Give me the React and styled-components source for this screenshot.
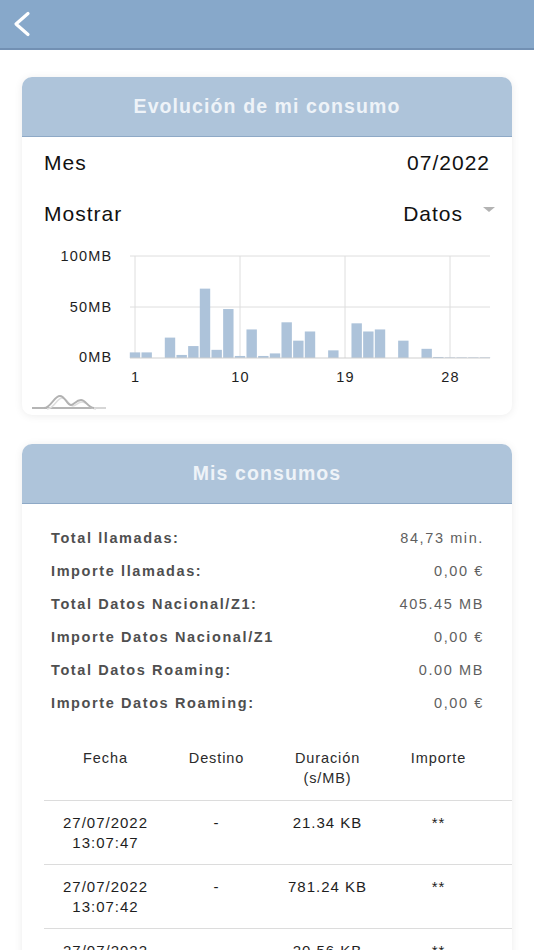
import React from 'react';
import styled, { createGlobalStyle } from 'styled-components';

const GlobalStyle = createGlobalStyle`
  * { box-sizing: border-box; }
  html, body { margin: 0; padding: 0; background: #fff; }
  body { font-family: "Liberation Sans", Arial, Helvetica, sans-serif; }
`;

const Page = styled.div`
  width: 534px;
  min-height: 950px;
  background: #fff;
`;

const TopBar = styled.header`
  height: 50px;
  background: #87a8ca;
  border-bottom: 2px solid #7290b3;
  display: flex;
  align-items: center;
  padding-left: 11px;
`;

const BackButton = styled.button`
  border: 0;
  background: transparent;
  padding: 0;
  width: 22px;
  height: 26px;
  display: flex;
  align-items: center;
  justify-content: center;
  cursor: pointer;
`;

const Content = styled.main`
  padding: 27px 22px 0;
  display: flex;
  flex-direction: column;
  gap: 29px;
`;

const Card = styled.section`
  background: #fff;
  border-radius: 10px;
  box-shadow: 0 1px 8px rgba(0, 0, 0, 0.08);
  overflow: hidden;
`;

const CardHeader = styled.h2`
  margin: 0;
  height: 60px;
  background: #aec4da;
  border-bottom: 1px solid #8ea9c6;
  display: flex;
  align-items: center;
  justify-content: center;
  color: #eef3f8;
  font-size: 19.5px;
  font-weight: 700;
  letter-spacing: 1.1px;
`;

const FieldRow = styled.div`
  height: 51px;
  padding: 0 22px;
  display: flex;
  align-items: center;
  justify-content: space-between;
  font-size: 21px;
  letter-spacing: 1px;
  color: #111;
`;

const SelectValue = styled.div`
  display: flex;
  align-items: center;
`;

const Caret = styled.span`
  width: 0;
  height: 0;
  margin-left: 20px;
  margin-right: -5px;
  margin-top: -9px;
  border-left: 6px solid transparent;
  border-right: 6px solid transparent;
  border-top: 5px solid #b3b3b3;
`;

const ChartSvg = styled.svg`
  display: block;
  font-family: "Liberation Sans", Arial, sans-serif;
`;

const MiniIcon = styled.svg`
  display: block;
  margin: 2px 0 3px 8px;
`;

const Summary = styled.div`
  padding: 17px 28px 0 29px;
`;

const SummaryRow = styled.div`
  height: 33px;
  display: flex;
  align-items: center;
  justify-content: space-between;
  font-size: 14.5px;
`;

const SummaryLabel = styled.span`
  font-weight: 700;
  color: #4f4f4f;
  letter-spacing: 1.6px;
`;

const SummaryValue = styled.span`
  color: #5f5f5f;
  letter-spacing: 1.6px;
`;

const Table = styled.div`
  margin-top: 29px;
  padding-left: 22px;
`;

const TableRow = styled.div`
  display: grid;
  grid-template-columns: repeat(4, 1fr);
  padding: ${(p) => (p.$head ? '0 18px 12px 6px' : '12px 18px 11px 6px')};
  border-bottom: 1.5px solid #dcdcdc;
  font-size: ${(p) => (p.$head ? '14.5px' : '15px')};
  color: ${(p) => (p.$head ? '#2b2b2b' : '#1e1e1e')};
  letter-spacing: ${(p) => (p.$head ? '0.9px' : '1px')};
  line-height: 20px;
`;

const Cell = styled.div`
  text-align: center;
`;

const values = [5.5, 5.5, 0, 20, 3, 11.7, 68, 8, 48, 2, 28, 2, 4.5, 35, 17, 26, 0, 7.5, 0, 34, 26, 28, 0, 17, 0, 9, 1, 0.6, 0.6, 0.6, 0.6];

const Chart = () => {
  const y0 = 119;
  const scale = 1.02;
  const dayX = (d) => 113 + (d - 1) * 11.667;
  const grid = '#dedede';
  return (
    <ChartSvg width="490" height="153" viewBox="0 0 490 153">
      {[17, 68].map((y) => (
        <line key={y} x1="108" x2="468" y1={y} y2={y} stroke={grid} strokeWidth="1" />
      ))}
      {[1, 10, 19, 28].map((d) => (
        <line key={d} x1={dayX(d)} x2={dayX(d)} y1="17" y2={y0} stroke={grid} strokeWidth="1" />
      ))}
      {values.map((v, i) =>
        v > 0 ? (
          <rect
            key={i}
            x={dayX(i + 1) - 5.2}
            y={y0 - v * scale}
            width="10.4"
            height={v * scale}
            fill="#adc3da"
          />
        ) : null
      )}
      <line x1="108" x2="468" y1={y0} y2={y0} stroke="#cfcfcf" strokeWidth="1" />
      {[
        ['100MB', 17],
        ['50MB', 68],
        ['0MB', 118],
      ].map(([t, y]) => (
        <text key={t} x="90.5" y={y} textAnchor="end" dominantBaseline="central" fontSize="14.5" fill="#1e1e1e" style={{ letterSpacing: '1.2px' }}>
          {t}
        </text>
      ))}
      {[1, 10, 19, 28].map((d) => (
        <text key={d} x={dayX(d) + 0.6} y="138" textAnchor="middle" dominantBaseline="central" fontSize="14.5" fill="#1e1e1e" style={{ letterSpacing: '1.2px' }}>
          {d}
        </text>
      ))}
    </ChartSvg>
  );
};

const summary = [
  ['Total llamadas:', '84,73 min.'],
  ['Importe llamadas:', '0,00 €'],
  ['Total Datos Nacional/Z1:', '405.45 MB'],
  ['Importe Datos Nacional/Z1', '0,00 €'],
  ['Total Datos Roaming:', '0.00 MB'],
  ['Importe Datos Roaming:', '0,00 €'],
];

const rows = [
  ['27/07/2022', '13:07:47', '-', '21.34 KB', '**'],
  ['27/07/2022', '13:07:42', '-', '781.24 KB', '**'],
  ['27/07/2022', '13:07:31', '-', '20.56 KB', '**'],
  ['27/07/2022', '12:51:10', '-', '4.12 KB', '**'],
];

export default function App() {
  return (
    <Page>
      <GlobalStyle />
      <TopBar>
        <BackButton aria-label="Volver">
          <svg width="20" height="26" viewBox="0 0 20 26">
            <polyline points="16,2.5 4,13 16,23.5" fill="none" stroke="#fff" strokeWidth="3.2" strokeLinecap="round" strokeLinejoin="round" />
          </svg>
        </BackButton>
      </TopBar>
      <Content>
        <Card>
          <CardHeader>Evolución de mi consumo</CardHeader>
          <FieldRow>
            <span>Mes</span>
            <span>07/2022</span>
          </FieldRow>
          <FieldRow>
            <span>Mostrar</span>
            <SelectValue>
              <span>Datos</span>
              <Caret />
            </SelectValue>
          </FieldRow>
          <Chart />
          <MiniIcon width="78" height="18" viewBox="0 0 78 18">
            <path d="M2 14 H64" stroke="#b5b5b5" strokeWidth="1.8" fill="none" />
            <path d="M64 14 H76" stroke="#d6d6d6" strokeWidth="1.8" fill="none" />
            <path d="M17 15 C24 15 27 4 32 4 C37 4 39 12 43 12 C46 12 48 8 52 8 C57 8 60 15 66 15" stroke="#dedede" strokeWidth="1.5" fill="none" />
            <path d="M14 14 C21 14 24 2 30 2 C35 2 37 11 41 11 C44 11 46 6 51 6 C56 6 58 14 64 14" stroke="#b2b2b2" strokeWidth="1.8" fill="none" />
          </MiniIcon>
        </Card>
        <Card>
          <CardHeader>Mis consumos</CardHeader>
          <Summary>
            {summary.map(([l, v]) => (
              <SummaryRow key={l}>
                <SummaryLabel>{l}</SummaryLabel>
                <SummaryValue>{v}</SummaryValue>
              </SummaryRow>
            ))}
          </Summary>
          <Table>
            <TableRow $head>
              <Cell>Fecha</Cell>
              <Cell>Destino</Cell>
              <Cell>
                Duración
                <br />
                (s/MB)
              </Cell>
              <Cell>Importe</Cell>
            </TableRow>
            {rows.map(([d, t, dest, dur, imp], i) => (
              <TableRow key={i}>
                <Cell>
                  {d}
                  <br />
                  {t}
                </Cell>
                <Cell>{dest}</Cell>
                <Cell>{dur}</Cell>
                <Cell>{imp}</Cell>
              </TableRow>
            ))}
          </Table>
        </Card>
      </Content>
    </Page>
  );
}
